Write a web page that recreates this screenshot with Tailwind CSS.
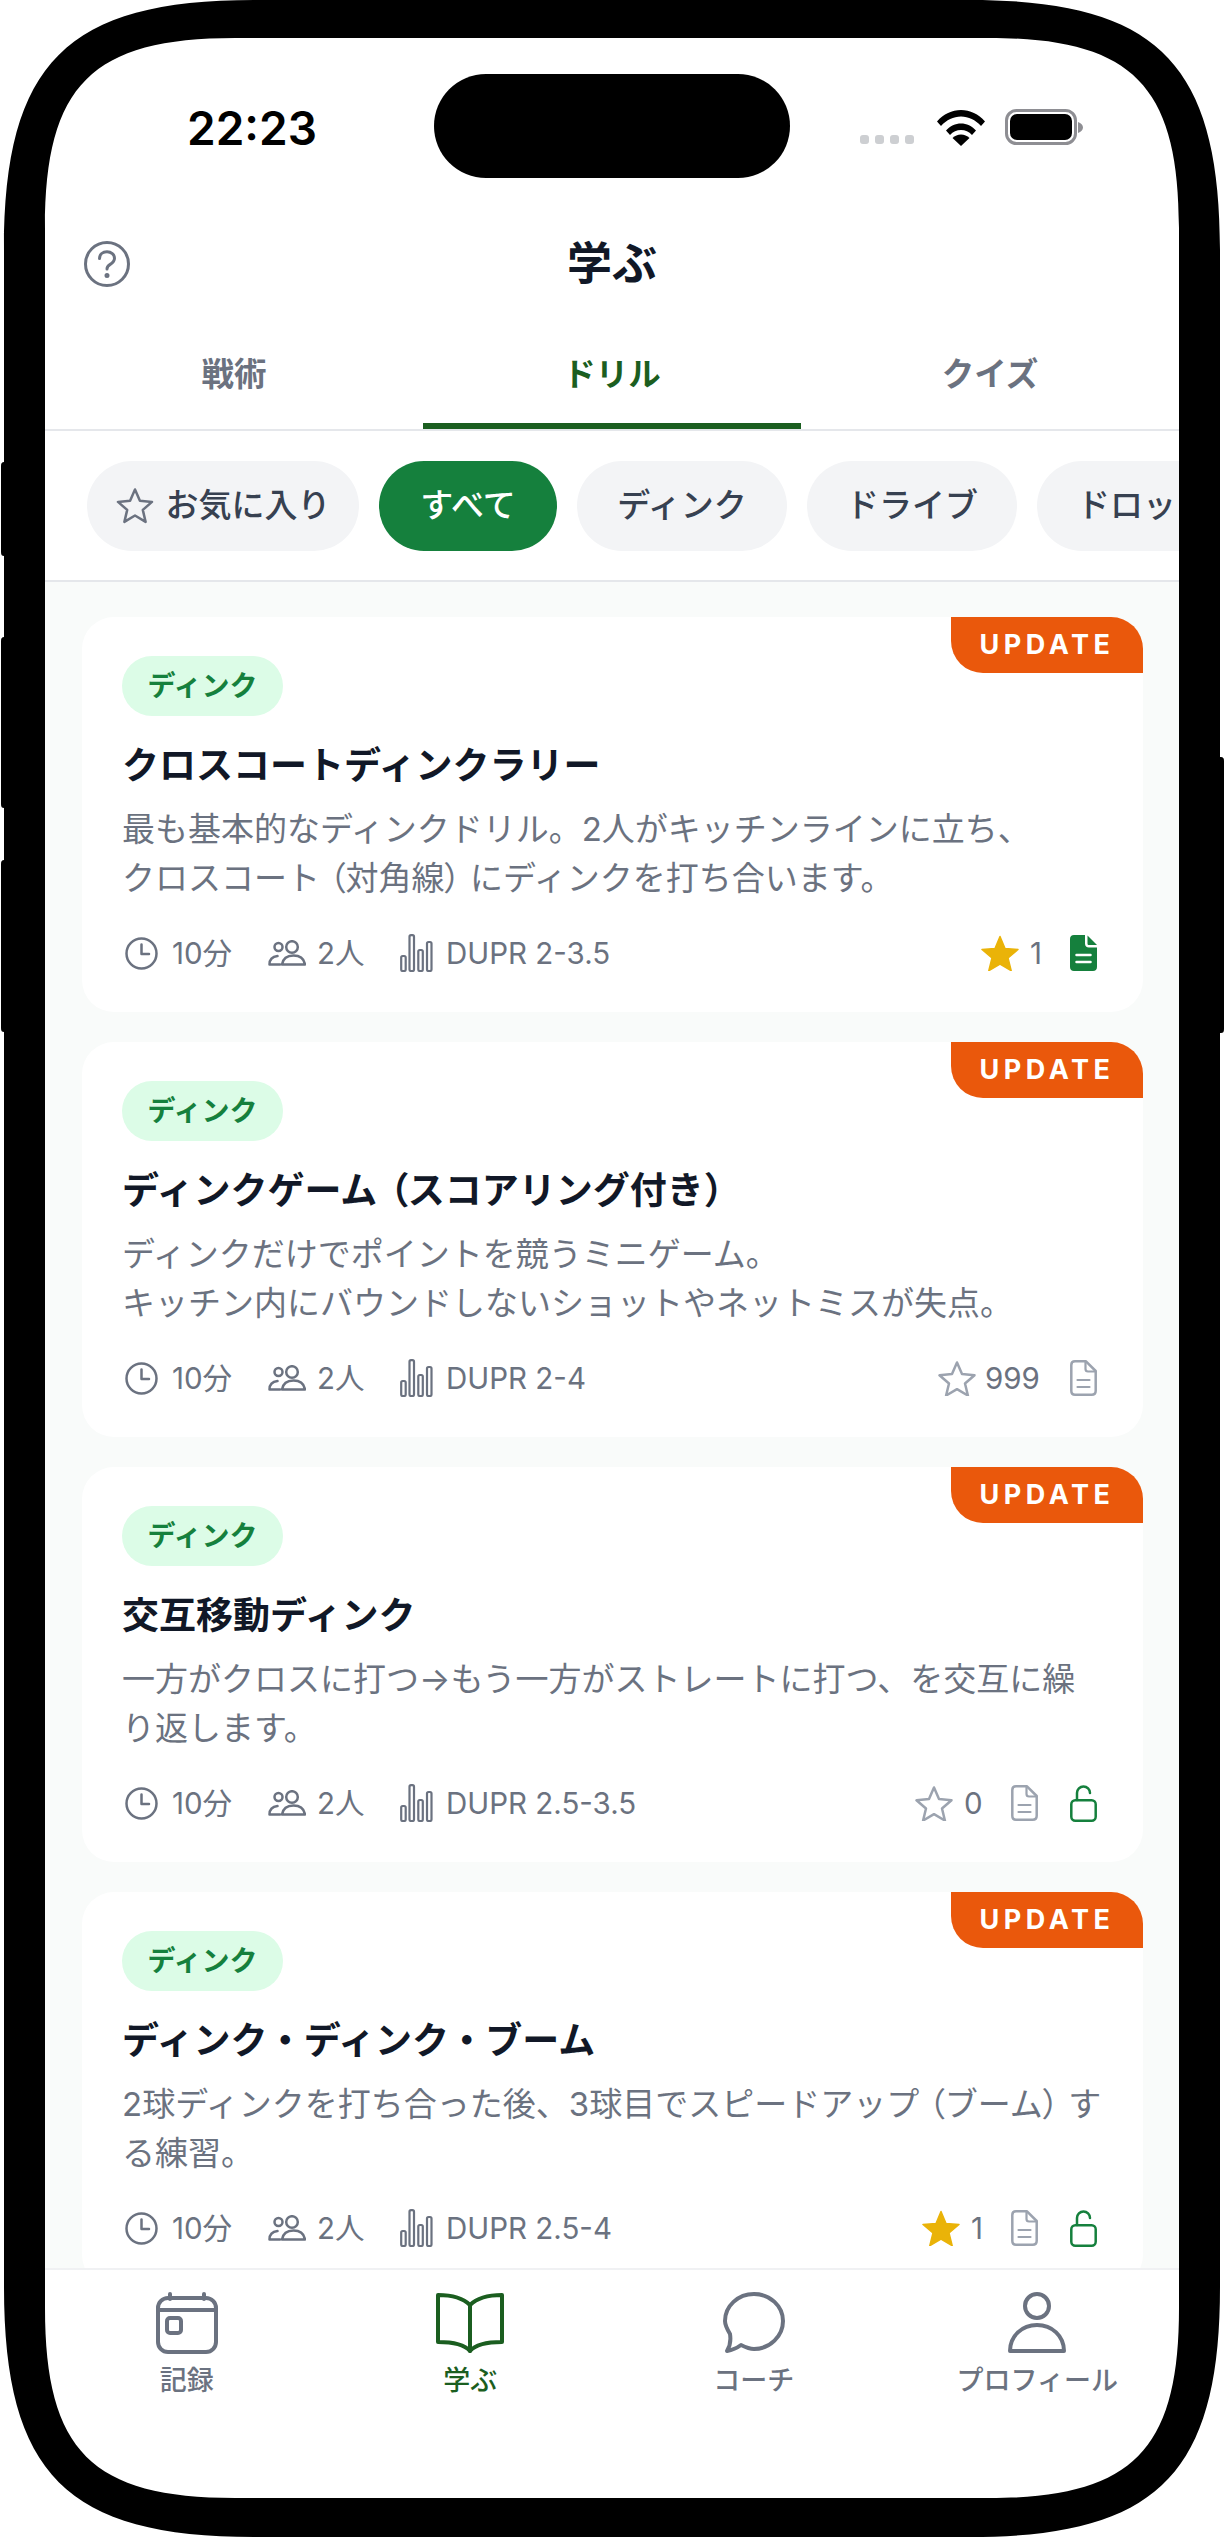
<!DOCTYPE html>
<html lang="ja"><head><meta charset="utf-8"><script src="https://cdn.jsdelivr.net/npm/@tailwindcss/browser@4"></script></head>
<body class="bg-white">
<div class="relative w-[1225px] h-[2538px] overflow-hidden bg-white pt-[38px] pl-[45px] font-['Inter','Noto_Sans_CJK_JP',sans-serif]">

  <!-- screen -->
  <div class="w-[1134px] h-[2460px] flex flex-col bg-white overflow-hidden">
    <!-- status bar -->
    <div class="relative h-[148px] shrink-0">
      <div class="absolute left-[142px] top-[64px] text-[46px] leading-[52px] font-semibold text-black">22:23</div>
      <div class="absolute left-[389px] top-[36px] w-[356px] h-[104px] rounded-[52px] bg-black"></div>
      <div class="absolute left-[815px] top-[97px] flex gap-[6px]">
        <span class="w-[9px] h-[9px] rounded-[3px] bg-[#cdcfd2]"></span><span class="w-[9px] h-[9px] rounded-[3px] bg-[#cdcfd2]"></span><span class="w-[9px] h-[9px] rounded-[3px] bg-[#cdcfd2]"></span><span class="w-[9px] h-[9px] rounded-[3px] bg-[#cdcfd2]"></span>
      </div>
      <svg class="absolute left-[892px] top-[72px]" width="48" height="36" viewBox="0 0 48 36"><path d="M0 11.500C6.500 4 15 0 24 0s17.500 4 24 11.500l-4 4.500C38.500 10 31.500 6.500 24 6.500S9.500 10 4 16z" fill="#000"/><path d="M9 20.500C13 16 18.500 13.500 24 13.500s11 2.500 15 7l-4 4.500c-3-3.200-6.800-5-11-5s-8 1.800-11 5z" fill="#000"/><path d="M15.500 28c2.300-2.200 5.300-3.500 8.500-3.500s6.200 1.300 8.500 3.500L24 36z" fill="#000"/></svg>
      <svg class="absolute left-[960px] top-[71px]" width="80" height="37" viewBox="0 0 80 37"><rect x="1.500" y="1.500" width="69" height="33" rx="10" fill="none" stroke="#8e8e93" stroke-width="3"/><rect x="5" y="5" width="62" height="26" rx="7" fill="#000"/><path d="M73 13c3 1 5 3 5 5.500s-2 4.500-5 5.500z" fill="#8e8e93"/></svg>
    </div>
    <!-- header -->
    <div class="relative h-[156px] shrink-0 flex items-center justify-center">
      <svg class="absolute left-[39px] top-[55px]" width="46" height="46" viewBox="0 0 46 46" fill="none" stroke="#6b7280" stroke-width="3" stroke-linecap="round" stroke-linejoin="round"><circle cx="23" cy="23" r="21.500"/><path d="M15.500 17.500c0-4 3.300-6.700 7.500-6.700s7.500 2.800 7.500 6.500c0 3.200-2 4.700-4.300 6.100-2 1.200-3.200 2.300-3.200 4.600"/><circle cx="23" cy="34.500" r="1" fill="#6b7280"/></svg>
      <h1 class="text-[45px] leading-[56px] font-bold text-[#111827]">学ぶ</h1>
    </div>
    <!-- tabs -->
    <div class="h-[89px] shrink-0 grid grid-cols-3 border-b-2 border-[#e5e7eb] text-[32.500px] leading-[66px] text-center">
      <div class="h-[87px] font-semibold text-[#6b7280]">戦術</div>
      <div class="h-[87px] font-bold text-[#1b5e20] border-b-[6px] border-[#1b5e20]">ドリル</div>
      <div class="h-[87px] font-semibold text-[#6b7280]">クイズ</div>
    </div>
    <!-- chips -->
    <div class="h-[151px] shrink-0 border-b-2 border-[#e5e7eb] pl-[42px] pt-[30px] flex items-start gap-[20px] overflow-hidden text-[33px] font-medium text-[#374151]">
      <div class="h-[90px] shrink-0 w-[272px] rounded-full bg-[#f3f4f6] flex items-center justify-center gap-[12px]">
        <svg width="38" height="38" viewBox="0 0 38 38" fill="none" stroke="#6b7280" stroke-width="2.500" stroke-linejoin="round"><path d="M19 2.500l4.900 11.300 12.100 1.100-9.200 8 2.800 12-10.600-6.400-10.600 6.400 2.800-12-9.200-8 12.100-1.100z"/></svg>
        <span>お気に入り</span>
      </div>
      <div class="h-[90px] shrink-0 w-[178px] rounded-full bg-[#15803d] text-white flex items-center justify-center">すべて</div>
      <div class="h-[90px] shrink-0 w-[210px] rounded-full bg-[#f3f4f6] flex items-center justify-center">ディンク</div>
      <div class="h-[90px] shrink-0 w-[210px] rounded-full bg-[#f3f4f6] flex items-center justify-center">ドライブ</div>
      <div class="h-[90px] shrink-0 w-[240px] rounded-full bg-[#f3f4f6] flex items-center pl-[40px]">ドロップ</div>
    </div>
    <!-- list -->
    <div class="flex-1 min-h-0 overflow-hidden bg-[#f9fbfa] pt-[35px] pl-[37px] pr-[36px] flex flex-col gap-[30px]">

      <article class="relative shrink-0 h-[395px] rounded-[32px] bg-white pt-[39px] pl-[40px] pr-[46px]">
        <div class="absolute right-0 top-0 w-[192px] h-[56px] rounded-tr-[32px] rounded-bl-[32px] bg-[#ea580c] flex items-center justify-center text-white text-[27px] font-bold tracking-[4.500px]">UPDATE</div>
        <div class="w-[161px] h-[60px] rounded-full bg-[#dcfce7] flex items-center justify-center text-[28px] font-bold text-[#15803d]">ディンク</div>
        <h2 class="mt-[25px] text-[37px] leading-[50px] font-bold text-[#111827]">クロスコートディンクラリー</h2>
        <p class="mt-[14px] text-[33px] leading-[49px] whitespace-nowrap text-[#6b7280]">最も基本的なディンクドリル。2人がキッチンラインに立ち、<br>クロスコート<span class="ml-[9px] [font-feature-settings:'palt']">（</span>対角線<span class="mr-[9px] [font-feature-settings:'palt']">）</span>にディンクを打ち合います。</p>
        <div class="mt-[30px] h-[40px] flex items-center text-[29.500px] text-[#6b7280]">
          <svg class="mr-[14px] ml-[3px]" width="33" height="33" viewBox="0 0 33 33" fill="none" stroke="#6b7280" stroke-width="2.500" stroke-linecap="round" stroke-linejoin="round"><circle cx="16.500" cy="16.500" r="15"/><path d="M16.500 7.500v9.500h7.500"/></svg>
          <span class="w-[96px]">10分</span>
          <svg class="mr-[11px]" width="38" height="26" viewBox="0 0 38 26" fill="none" stroke="#6b7280" stroke-width="2.500" stroke-linecap="round" stroke-linejoin="round"><circle cx="24" cy="7" r="5.800"/><path d="M14 24.500c1-6 5-9 11.500-9s10.500 3 11.500 9z"/><circle cx="10.500" cy="7" r="4"/><path d="M12 24.500H1.500c0-5 3-8 8-8.500"/></svg>
          <span class="w-[83px]">2人</span>
          <svg class="mr-[13px]" width="33" height="38" viewBox="0 0 33 38" fill="none" stroke="#6b7280" stroke-width="2.200"><rect x="1.200" y="22" width="4.500" height="15" rx="1.500"/><rect x="9.500" y="1.200" width="4.500" height="35.800" rx="1.500"/><rect x="18.300" y="16" width="4.500" height="21" rx="1.500"/><rect x="27" y="8" width="4.500" height="29" rx="1.500"/></svg>
          <span>DUPR 2-3.5</span>
          <div class="ml-auto flex items-center">
            <svg width="38" height="36" viewBox="0 0 38 36" fill="#eab308" stroke="#eab308" stroke-width="1.500" stroke-linejoin="round"><path d="M19 1.500l5 12 13 1-10 8.500 3.200 12.700L19 29l-11.200 6.700L11 23 1 14.500l13-1z"/></svg>
            <span class="ml-[11px] w-[40px]">1</span>
            <svg width="27" height="36" viewBox="0 0 27 36"><path d="M4 0h11v8.500c0 2.500 1.500 4 4 4h8V32c0 2.500-1.500 4-4 4H4c-2.500 0-4-1.500-4-4V4C0 1.500 1.500 0 4 0z" fill="#15803d"/><path d="M17.500 .5L27 10h-8c-1 0-1.500-.5-1.500-1.500z" fill="#15803d"/><path d="M6.500 20h14M6.500 27h14" stroke="#fff" stroke-width="2.500" stroke-linecap="round"/></svg>
          </div>
        </div>
      </article>

      <article class="relative shrink-0 h-[395px] rounded-[32px] bg-white pt-[39px] pl-[40px] pr-[46px]">
        <div class="absolute right-0 top-0 w-[192px] h-[56px] rounded-tr-[32px] rounded-bl-[32px] bg-[#ea580c] flex items-center justify-center text-white text-[27px] font-bold tracking-[4.500px]">UPDATE</div>
        <div class="w-[161px] h-[60px] rounded-full bg-[#dcfce7] flex items-center justify-center text-[28px] font-bold text-[#15803d]">ディンク</div>
        <h2 class="mt-[25px] text-[37px] leading-[50px] font-bold text-[#111827]">ディンクゲーム<span class="ml-[12px] [font-feature-settings:'palt']">（</span>スコアリング付き）</h2>
        <p class="mt-[14px] text-[33px] leading-[49px] whitespace-nowrap text-[#6b7280]">ディンクだけでポイントを競うミニゲーム。<br>キッチン内にバウンドしないショットやネットミスが失点。</p>
        <div class="mt-[30px] h-[40px] flex items-center text-[29.500px] text-[#6b7280]">
          <svg class="mr-[14px] ml-[3px]" width="33" height="33" viewBox="0 0 33 33" fill="none" stroke="#6b7280" stroke-width="2.500" stroke-linecap="round" stroke-linejoin="round"><circle cx="16.500" cy="16.500" r="15"/><path d="M16.500 7.500v9.500h7.500"/></svg>
          <span class="w-[96px]">10分</span>
          <svg class="mr-[11px]" width="38" height="26" viewBox="0 0 38 26" fill="none" stroke="#6b7280" stroke-width="2.500" stroke-linecap="round" stroke-linejoin="round"><circle cx="24" cy="7" r="5.800"/><path d="M14 24.500c1-6 5-9 11.500-9s10.500 3 11.500 9z"/><circle cx="10.500" cy="7" r="4"/><path d="M12 24.500H1.500c0-5 3-8 8-8.500"/></svg>
          <span class="w-[83px]">2人</span>
          <svg class="mr-[13px]" width="33" height="38" viewBox="0 0 33 38" fill="none" stroke="#6b7280" stroke-width="2.200"><rect x="1.200" y="22" width="4.500" height="15" rx="1.500"/><rect x="9.500" y="1.200" width="4.500" height="35.800" rx="1.500"/><rect x="18.300" y="16" width="4.500" height="21" rx="1.500"/><rect x="27" y="8" width="4.500" height="29" rx="1.500"/></svg>
          <span>DUPR 2-4</span>
          <div class="ml-auto flex items-center">
            <svg width="38" height="36" viewBox="0 0 38 36" fill="none" stroke="#9ca3af" stroke-width="2.500" stroke-linejoin="round"><path d="M19 2.500l5 11.500 12.500 1.200-9.500 8.300 2.900 12L19 29.200 8.100 35.500l2.900-12-9.500-8.300L14 14z"/></svg>
            <span class="ml-[9px] w-[85px]">999</span>
            <svg width="27" height="36" viewBox="0 0 27 36" fill="none" stroke="#9ca3af" stroke-width="2.500" stroke-linejoin="round" stroke-linecap="round"><path d="M5 1.300h11L25.700 11v19.700c0 2.500-1.500 4-4 4H5c-2.500 0-3.700-1.500-3.700-4V5c0-2.500 1.200-3.700 3.700-3.700z"/><path d="M15.500 1.500V9c0 1.500 1 2.500 2.500 2.500h7.500M7.500 20h12M7.500 27h12" stroke-width="2.200"/></svg>
          </div>
        </div>
      </article>

      <article class="relative shrink-0 h-[395px] rounded-[32px] bg-white pt-[39px] pl-[40px] pr-[46px]">
        <div class="absolute right-0 top-0 w-[192px] h-[56px] rounded-tr-[32px] rounded-bl-[32px] bg-[#ea580c] flex items-center justify-center text-white text-[27px] font-bold tracking-[4.500px]">UPDATE</div>
        <div class="w-[161px] h-[60px] rounded-full bg-[#dcfce7] flex items-center justify-center text-[28px] font-bold text-[#15803d]">ディンク</div>
        <h2 class="mt-[25px] text-[37px] leading-[50px] font-bold text-[#111827]">交互移動ディンク</h2>
        <p class="mt-[14px] text-[33px] leading-[49px] whitespace-nowrap text-[#6b7280]">一方がクロスに打つ→もう一方がストレートに打つ、を交互に繰<br>り返します。</p>
        <div class="mt-[30px] h-[40px] flex items-center text-[29.500px] text-[#6b7280]">
          <svg class="mr-[14px] ml-[3px]" width="33" height="33" viewBox="0 0 33 33" fill="none" stroke="#6b7280" stroke-width="2.500" stroke-linecap="round" stroke-linejoin="round"><circle cx="16.500" cy="16.500" r="15"/><path d="M16.500 7.500v9.500h7.500"/></svg>
          <span class="w-[96px]">10分</span>
          <svg class="mr-[11px]" width="38" height="26" viewBox="0 0 38 26" fill="none" stroke="#6b7280" stroke-width="2.500" stroke-linecap="round" stroke-linejoin="round"><circle cx="24" cy="7" r="5.800"/><path d="M14 24.500c1-6 5-9 11.500-9s10.500 3 11.500 9z"/><circle cx="10.500" cy="7" r="4"/><path d="M12 24.500H1.500c0-5 3-8 8-8.500"/></svg>
          <span class="w-[83px]">2人</span>
          <svg class="mr-[13px]" width="33" height="38" viewBox="0 0 33 38" fill="none" stroke="#6b7280" stroke-width="2.200"><rect x="1.200" y="22" width="4.500" height="15" rx="1.500"/><rect x="9.500" y="1.200" width="4.500" height="35.800" rx="1.500"/><rect x="18.300" y="16" width="4.500" height="21" rx="1.500"/><rect x="27" y="8" width="4.500" height="29" rx="1.500"/></svg>
          <span>DUPR 2.5-3.5</span>
          <div class="ml-auto flex items-center">
            <svg width="38" height="36" viewBox="0 0 38 36" fill="none" stroke="#9ca3af" stroke-width="2.500" stroke-linejoin="round"><path d="M19 2.500l5 11.500 12.500 1.200-9.500 8.300 2.900 12L19 29.200 8.100 35.500l2.900-12-9.500-8.300L14 14z"/></svg>
            <span class="ml-[11px] w-[47px]">0</span>
            <svg width="27" height="36" viewBox="0 0 27 36" fill="none" stroke="#9ca3af" stroke-width="2.500" stroke-linejoin="round" stroke-linecap="round"><path d="M5 1.300h11L25.700 11v19.700c0 2.500-1.500 4-4 4H5c-2.500 0-3.700-1.500-3.700-4V5c0-2.500 1.200-3.700 3.700-3.700z"/><path d="M15.500 1.500V9c0 1.500 1 2.500 2.500 2.500h7.500M7.500 20h12M7.500 27h12" stroke-width="2.200"/></svg>
            <svg class="ml-[32px]" width="27" height="37" viewBox="0 0 27 37" fill="none" stroke="#15803d" stroke-width="2.500" stroke-linecap="round" stroke-linejoin="round"><path d="M7 15V8a6.500 6.500 0 0 1 13 0"/><rect x="1.300" y="15.300" width="24.400" height="20.400" rx="4"/></svg>
          </div>
        </div>
      </article>

      <article class="relative shrink-0 h-[395px] rounded-[32px] bg-white pt-[39px] pl-[40px] pr-[46px]">
        <div class="absolute right-0 top-0 w-[192px] h-[56px] rounded-tr-[32px] rounded-bl-[32px] bg-[#ea580c] flex items-center justify-center text-white text-[27px] font-bold tracking-[4.500px]">UPDATE</div>
        <div class="w-[161px] h-[60px] rounded-full bg-[#dcfce7] flex items-center justify-center text-[28px] font-bold text-[#15803d]">ディンク</div>
        <h2 class="mt-[25px] text-[37px] leading-[50px] font-bold text-[#111827]">ディンク・ディンク・ブーム</h2>
        <p class="mt-[14px] text-[33px] leading-[49px] whitespace-nowrap text-[#6b7280]">2球ディンクを打ち合った後、3球目でスピードアップ<span class="ml-[9px] [font-feature-settings:'palt']">（</span>ブーム<span class="mr-[9px] [font-feature-settings:'palt']">）</span>す<br>る練習。</p>
        <div class="mt-[30px] h-[40px] flex items-center text-[29.500px] text-[#6b7280]">
          <svg class="mr-[14px] ml-[3px]" width="33" height="33" viewBox="0 0 33 33" fill="none" stroke="#6b7280" stroke-width="2.500" stroke-linecap="round" stroke-linejoin="round"><circle cx="16.500" cy="16.500" r="15"/><path d="M16.500 7.500v9.500h7.500"/></svg>
          <span class="w-[96px]">10分</span>
          <svg class="mr-[11px]" width="38" height="26" viewBox="0 0 38 26" fill="none" stroke="#6b7280" stroke-width="2.500" stroke-linecap="round" stroke-linejoin="round"><circle cx="24" cy="7" r="5.800"/><path d="M14 24.500c1-6 5-9 11.500-9s10.500 3 11.500 9z"/><circle cx="10.500" cy="7" r="4"/><path d="M12 24.500H1.500c0-5 3-8 8-8.500"/></svg>
          <span class="w-[83px]">2人</span>
          <svg class="mr-[13px]" width="33" height="38" viewBox="0 0 33 38" fill="none" stroke="#6b7280" stroke-width="2.200"><rect x="1.200" y="22" width="4.500" height="15" rx="1.500"/><rect x="9.500" y="1.200" width="4.500" height="35.800" rx="1.500"/><rect x="18.300" y="16" width="4.500" height="21" rx="1.500"/><rect x="27" y="8" width="4.500" height="29" rx="1.500"/></svg>
          <span>DUPR 2.5-4</span>
          <div class="ml-auto flex items-center">
            <svg width="38" height="36" viewBox="0 0 38 36" fill="#eab308" stroke="#eab308" stroke-width="1.500" stroke-linejoin="round"><path d="M19 1.500l5 12 13 1-10 8.500 3.200 12.700L19 29l-11.200 6.700L11 23 1 14.500l13-1z"/></svg>
            <span class="ml-[11px] w-[40px]">1</span>
            <svg width="27" height="36" viewBox="0 0 27 36" fill="none" stroke="#9ca3af" stroke-width="2.500" stroke-linejoin="round" stroke-linecap="round"><path d="M5 1.300h11L25.700 11v19.700c0 2.500-1.500 4-4 4H5c-2.500 0-3.700-1.500-3.700-4V5c0-2.500 1.200-3.700 3.700-3.700z"/><path d="M15.500 1.500V9c0 1.500 1 2.500 2.500 2.500h7.500M7.500 20h12M7.500 27h12" stroke-width="2.200"/></svg>
            <svg class="ml-[32px]" width="27" height="37" viewBox="0 0 27 37" fill="none" stroke="#15803d" stroke-width="2.500" stroke-linecap="round" stroke-linejoin="round"><path d="M7 15V8a6.500 6.500 0 0 1 13 0"/><rect x="1.300" y="15.300" width="24.400" height="20.400" rx="4"/></svg>
          </div>
        </div>
      </article>
    </div>
    <!-- bottom nav -->
    <nav class="h-[230px] shrink-0 border-t-2 border-[#f0f1f3] bg-white grid grid-cols-4 pt-[22px] text-[27px] leading-[36px] font-medium text-[#6b7280] text-center">
      <div class="flex flex-col items-center gap-[9px]">
        <svg width="62" height="62" viewBox="0 0 62 62" fill="none" stroke="#6b7280" stroke-width="4" stroke-linecap="round" stroke-linejoin="round"><rect x="2" y="6" width="58" height="54" rx="10"/><path d="M2 18h58M14 2v5M48 2v5"/><rect x="11" y="26" width="14" height="15" rx="3"/></svg>
        <span>記録</span>
      </div>
      <div class="flex flex-col items-center gap-[9px] text-[#1b5e20]">
        <svg width="68" height="62" viewBox="0 0 68 62" fill="none" stroke="#1b5e20" stroke-width="4" stroke-linecap="round" stroke-linejoin="round"><path d="M34 13C28 7 16 3 2 3v47c14 0 26 2 32 9 6-7 18-9 32-9V3C52 3 40 7 34 13z"/><path d="M34 13v46"/></svg>
        <span>学ぶ</span>
      </div>
      <div class="flex flex-col items-center gap-[9px]">
        <svg width="62" height="62" viewBox="0 0 62 62" fill="none" stroke="#6b7280" stroke-width="4" stroke-linecap="round" stroke-linejoin="round"><path d="M7 42C4 37 2 33 2 29 2 14 15 2 31 2s29 12 29 27-13 28-29 28c-5 0-9-2-13-4-4 3-8 5-14 6 3-5 4-11 3-17z"/></svg>
        <span>コーチ</span>
      </div>
      <div class="flex flex-col items-center gap-[9px]">
        <svg width="58" height="62" viewBox="0 0 58 62" fill="none" stroke="#6b7280" stroke-width="4" stroke-linecap="round" stroke-linejoin="round"><circle cx="29" cy="14" r="12"/><path d="M2 59c0-15 12-26 27-26s27 11 27 26z"/></svg>
        <span>プロフィール</span>
      </div>
    </nav>
  </div>

  <!-- phone frame laid over the screen -->
  <svg class="absolute left-0 top-0 pointer-events-none" width="1225" height="2538" viewBox="0 0 1225 2538">
    <path d="M1 466c0-3 1-4 3-4h6v94H4c-2 0-3-1-3-4zM1 641c0-3 1-4 3-4h6v171H4c-2 0-3-1-3-4zM1 864c0-3 1-4 3-4h6v172H4c-2 0-3-1-3-4zM1224 761c0-3-1-4-3-4h-6v276h6c2 0 3-1 3-4z" fill="#000"/>
    <path fill="#000" fill-rule="evenodd" d="M254 0H970C1157 0 1220 63 1220 250V2287C1220 2474 1157 2537 970 2537H254C67 2537 4 2474 4 2287V250C4 63 67 0 254 0Z M235 38C92 38 45 85 45 228V2308C45 2451 92 2498 235 2498H989C1132 2498 1179 2451 1179 2308V228C1179 85 1132 38 989 38Z"/>
  </svg>
</div>
</body></html>
